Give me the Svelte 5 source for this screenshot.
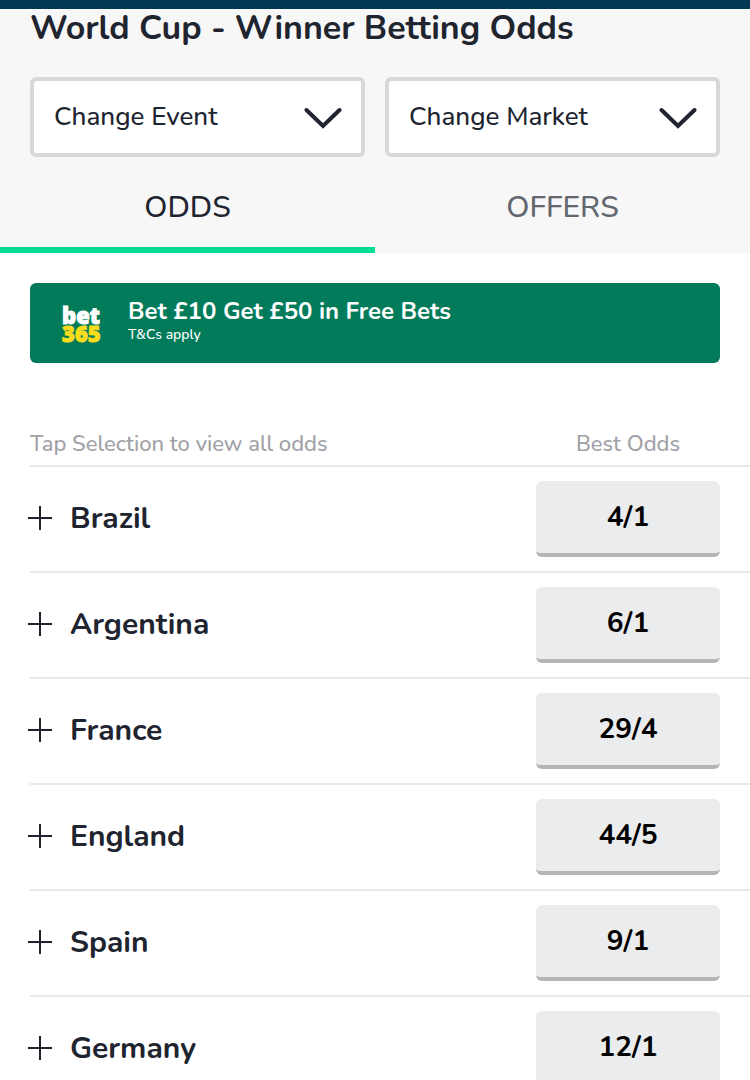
<script>
	const filters = [
		{ id: 'event', label: 'Change Event' },
		{ id: 'market', label: 'Change Market' }
	];

	const tabs = ['ODDS', 'OFFERS'];

	const selections = [
		{ name: 'Brazil', odds: '4/1' },
		{ name: 'Argentina', odds: '6/1' },
		{ name: 'France', odds: '29/4' },
		{ name: 'England', odds: '44/5' },
		{ name: 'Spain', odds: '9/1' },
		{ name: 'Germany', odds: '12/1' }
	];

	let active = $state('ODDS');
</script>

<header>
	<h1>World Cup - Winner Betting Odds</h1>
	<div class="filters">
		{#each filters as filter}
			<div class="filter">
				<select id={filter.id} aria-label={filter.label}>
					<option>{filter.label}</option>
				</select>
				<svg viewBox="0 0 38 24" aria-hidden="true">
					<path d="M2.5 3 19 19 35.5 3" />
				</svg>
			</div>
		{/each}
	</div>
	<nav>
		{#each tabs as tab}
			<button class="tab" class:active={active === tab} onclick={() => (active = tab)}>
				{tab}
			</button>
		{/each}
	</nav>
</header>

<main>
	<a class="offer" href="#offer">
		<span class="logo">
			<span>bet</span>
			<span class="yellow">365</span>
		</span>
		<span class="offer-text">
			<strong>Bet £10 Get £50 in Free Bets</strong>
			<small>T&amp;Cs apply</small>
		</span>
	</a>

	<table>
		<thead>
			<tr>
				<th class="hint">Tap Selection to view all odds</th>
				<th class="best">Best Odds</th>
			</tr>
		</thead>
		<tbody>
			{#each selections as selection}
				<tr>
					<td>
						<button class="selection">
							<svg viewBox="0 0 24 24" aria-hidden="true">
								<path d="M12 0v24M0 12h24" />
							</svg>
							{selection.name}
						</button>
					</td>
					<td class="best">
						<button class="odds">{selection.odds}</button>
					</td>
				</tr>
			{/each}
		</tbody>
	</table>
</main>

<style>
	:global(*) {
		box-sizing: border-box;
	}

	:global(body) {
		margin: 0;
		background: #fff;
		color: #20242f;
		font-family: Nunito, Lato, sans-serif;
	}

	button,
	select {
		margin: 0;
		padding: 0;
		border: 0;
		background: none;
		color: inherit;
		font: inherit;
		cursor: pointer;
	}

	header {
		border-top: 9px solid #023753;
		background: #f7f7f7;
	}

	h1 {
		margin: 0;
		padding: 0 30px 30px;
		font-size: 34px;
		font-weight: 700;
		line-height: 38px;
	}

	.filters {
		display: grid;
		grid-template-columns: 1fr 1fr;
		gap: 20px;
		padding: 0 30px;
	}

	.filter {
		position: relative;
	}

	select {
		display: block;
		appearance: none;
		width: 100%;
		height: 80px;
		padding: 0 60px 2px 20px;
		border: 4px solid #d8d8d8;
		border-radius: 6px;
		background: #fff;
		font-size: 26px;
		font-weight: 500;
	}

	.filter svg {
		position: absolute;
		top: 30px;
		right: 23px;
		width: 38px;
		height: 24px;
		pointer-events: none;
	}

	path {
		fill: none;
		stroke: #20242f;
	}

	.filter path {
		stroke-width: 4;
		stroke-linecap: round;
	}

	nav {
		display: flex;
	}

	.tab {
		flex: 1;
		height: 96px;
		padding-top: 10px;
		border-bottom: 6px solid transparent;
		color: #63666d;
		font-size: 30px;
		font-weight: 500;
	}

	.tab.active {
		border-color: #05dc96;
		color: #20242f;
	}

	.offer {
		display: flex;
		align-items: center;
		height: 80px;
		margin: 30px 30px 62px;
		padding: 0 32px;
		border-radius: 6px;
		background: #027b5b;
		color: #fff;
		text-decoration: none;
	}

	.logo {
		display: flex;
		flex-direction: column;
		width: 66px;
		padding-top: 2px;
		font-family: 'Noto Sans', sans-serif;
		font-size: 22px;
		font-weight: 900;
		line-height: 18px;
		-webkit-text-stroke: 1px;
	}

	.yellow {
		color: #f9dc1c;
	}

	.offer-text {
		display: flex;
		flex-direction: column;
		padding-bottom: 4px;
	}

	strong {
		font-size: 24px;
		font-weight: 700;
		line-height: 28px;
	}

	small {
		font-size: 14px;
		font-weight: 500;
		line-height: 20px;
	}

	table {
		width: calc(100% - 30px);
		margin-left: 30px;
		border-collapse: separate;
		border-spacing: 0;
	}

	th {
		height: 40px;
		padding: 0 0 2px;
		color: #a0a1a6;
		font-size: 22px;
		font-weight: 500;
	}

	.hint {
		text-align: left;
	}

	td {
		padding: 14px 0;
		border-top: 2px solid #e8e8e8;
	}

	.best {
		width: 214px;
		padding-right: 30px;
	}

	.selection {
		display: flex;
		align-items: center;
		gap: 18px;
		width: 100%;
		height: 76px;
		margin-left: -2px;
		padding-bottom: 2px;
		font-size: 30px;
		font-weight: 700;
	}

	.selection svg {
		width: 24px;
		height: 24px;
	}

	.selection path {
		stroke-width: 2;
	}

	.odds {
		display: block;
		width: 184px;
		height: 76px;
		border-bottom: 4px solid #b5b5b5;
		border-radius: 6px;
		background: #ebecee;
		color: #000;
		font-size: 28px;
		font-weight: 700;
	}
</style>
